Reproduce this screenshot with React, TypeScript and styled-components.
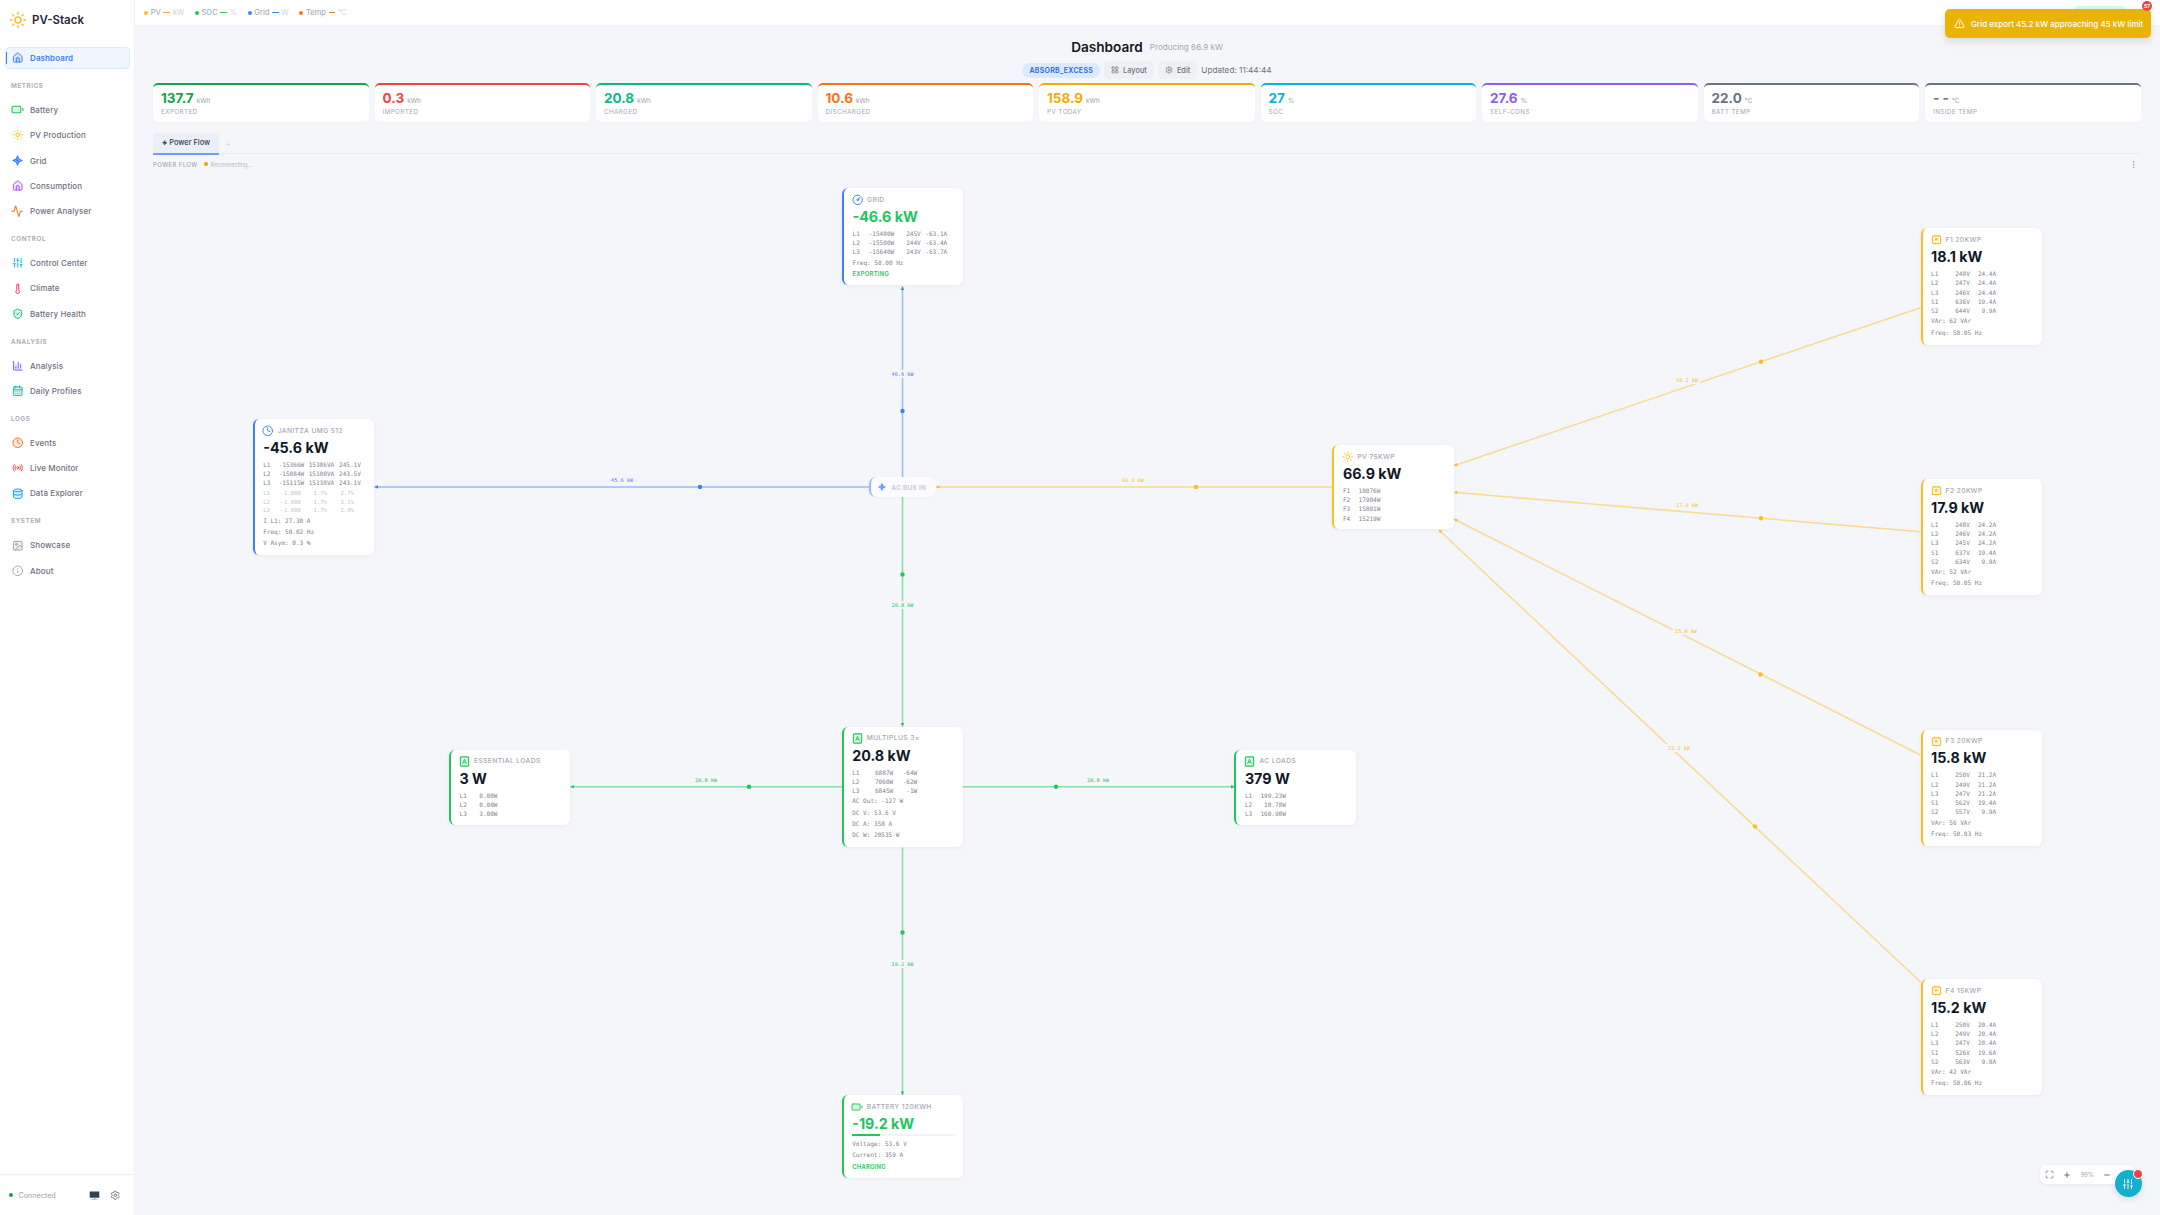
import React from "react";
import styled, { createGlobalStyle } from "styled-components";
import {
	Activity,
	Battery,
	CalendarDays,
	ChartColumn,
	CircleGauge,
	Clock,
	Database,
	EllipsisVertical,
	House,
	Image,
	Info,
	LayoutGrid,
	Maximize,
	Minus,
	Plus,
	Radio,
	Settings,
	ShieldCheck,
	SlidersVertical,
	Sun,
	Thermometer,
	TriangleAlert,
	Zap,
} from "lucide-react";

const BLUE = "#3b82f6";
const GREEN = "#22c55e";
const YELLOW = "#fbbf24";

// canvas origin on the page, node and edge numbers below are page coordinates
const OX = 153;
const OY = 174;

const SparkIcon = ({ size = 10, color = BLUE }: { size?: number; color?: string }) => (
	<svg width={size} height={size} viewBox='0 0 24 24' fill={color} fillOpacity={0.25} stroke={color} strokeWidth={2.4} strokeLinejoin='round'>
		<path d='M12 2l3 7 7 3-7 3-3 7-3-7-7-3 7-3z' />
		<path d='M14 7l-5 5h6l-5 5' fill='none' />
	</svg>
);

const InverterIcon = () => (
	<svg width={11} height={11} viewBox='0 0 24 24' fill='none' stroke={YELLOW} strokeWidth={2.4} strokeLinejoin='round'>
		<rect x='3' y='4' width='18' height='17' rx='3' fill={YELLOW} fillOpacity={0.15} />
		<path d='M8 1.5v2.5M16 1.5v2.5' />
		<rect x='9' y='9' width='5' height='5' fill={YELLOW} stroke='none' />
	</svg>
);

const LoadIcon = () => (
	<svg width={11} height={11} viewBox='0 0 24 24' fill='none' stroke={GREEN} strokeWidth={2.4} strokeLinejoin='round'>
		<rect x='3' y='2' width='18' height='20' rx='2' fill={GREEN} fillOpacity={0.15} />
		<path d='M8 17l4-10 4 10M9.5 13.5h5' strokeWidth={2} />
	</svg>
);

const DesktopIcon = () => (
	<svg width={11} height={11} viewBox='0 0 24 24'>
		<rect x='1.5' y='3' width='21' height='14' rx='1' fill='#334155' />
		<rect x='9.5' y='17' width='5' height='3' fill='#a5c4d4' />
		<rect x='5' y='20' width='14' height='2' fill='#a5c4d4' />
	</svg>
);

const duo = { fill: "currentColor", fillOpacity: 0.15, strokeWidth: 2 };

const NAV = [
	{
		items: [{ label: "Dashboard", icon: <House size={11.5} {...duo} />, color: "#3b82f6", active: true }],
	},
	{
		title: "Metrics",
		items: [
			{ label: "Battery", icon: <Battery size={13} {...duo} />, color: "#22c55e" },
			{ label: "PV Production", icon: <Sun size={11.5} {...duo} />, color: "#fbbf24" },
			{ label: "Grid", icon: <SparkIcon size={11} />, color: "#3b82f6" },
			{ label: "Consumption", icon: <House size={11.5} {...duo} />, color: "#a855f7" },
			{ label: "Power Analyser", icon: <Activity size={12.5} />, color: "#f97316" },
		],
	},
	{
		title: "Control",
		items: [
			{ label: "Control Center", icon: <SlidersVertical size={11.5} />, color: "#06b6d4" },
			{ label: "Climate", icon: <Thermometer size={11.5} {...duo} />, color: "#f43f5e" },
			{ label: "Battery Health", icon: <ShieldCheck size={11.5} {...duo} />, color: "#10b981" },
		],
	},
	{
		title: "Analysis",
		items: [
			{ label: "Analysis", icon: <ChartColumn size={11.5} {...duo} />, color: "#6366f1" },
			{ label: "Daily Profiles", icon: <CalendarDays size={11.5} {...duo} />, color: "#14b8a6" },
		],
	},
	{
		title: "Logs",
		items: [
			{ label: "Events", icon: <Clock size={11.5} {...duo} />, color: "#f97316" },
			{ label: "Live Monitor", icon: <Radio size={11.5} />, color: "#ef4444" },
			{ label: "Data Explorer", icon: <Database size={11.5} {...duo} />, color: "#0ea5e9" },
		],
	},
	{
		title: "System",
		items: [
			{ label: "Showcase", icon: <Image size={11.5} {...duo} />, color: "#9ca3af" },
			{ label: "About", icon: <Info size={11.5} />, color: "#9ca3af" },
		],
	},
];

const LEGEND = [
	{ label: "PV", unit: "kW", color: "#fbbf24", dash: "#f59e42" },
	{ label: "SOC", unit: "%", color: "#22c55e", dash: "#22c55e" },
	{ label: "Grid", unit: "W", color: "#3b82f6", dash: "#3b82f6" },
	{ label: "Temp", unit: "°C", color: "#f97316", dash: "#f97316" },
];

const KPIS = [
	{ value: "137.7", unit: "kWh", label: "Exported", color: "#16a34a" },
	{ value: "0.3", unit: "kWh", label: "Imported", color: "#ef4444" },
	{ value: "20.8", unit: "kWh", label: "Charged", color: "#10b981" },
	{ value: "10.6", unit: "kWh", label: "Discharged", color: "#f97316" },
	{ value: "158.9", unit: "kWh", label: "PV Today", color: "#f0ad0a" },
	{ value: "27", unit: "%", label: "SOC", color: "#06b6d4" },
	{ value: "27.6", unit: "%", label: "Self-Cons", color: "#8b5cf6" },
	{ value: "22.0", unit: "°C", label: "Batt Temp", color: "#6b7280" },
	{ value: "- -", unit: "°C", label: "Inside Temp", color: "#6b7280" },
];

type EdgeData = {
	from: [number, number];
	to: [number, number];
	dot: [number, number];
	label: string;
	at: [number, number];
	color: string;
};

const EDGES: EdgeData[] = [
	{ from: [902.5, 477], to: [902.5, 286.5], dot: [902.5, 411], label: "46.6 kW", at: [902.5, 374], color: BLUE },
	{ from: [869, 487], to: [374.5, 487], dot: [700, 487], label: "45.6 kW", at: [622, 480], color: BLUE },
	{ from: [1332, 487], to: [936, 487], dot: [1196, 487], label: "66.9 kW", at: [1133, 480], color: YELLOW },
	{ from: [902.5, 497], to: [902.5, 726.5], dot: [902.5, 574.5], label: "20.8 kW", at: [902.5, 605], color: GREEN },
	{ from: [842, 786.7], to: [570.5, 786.7], dot: [749, 786.7], label: "20.8 kW", at: [706, 780], color: GREEN },
	{ from: [963, 786.7], to: [1234.5, 786.7], dot: [1056, 786.7], label: "20.8 kW", at: [1098, 780], color: GREEN },
	{ from: [902.5, 847.5], to: [902.5, 1095], dot: [902.5, 932.5], label: "19.2 kW", at: [902.5, 964], color: GREEN },
	{ from: [1920.5, 307.7], to: [1453.8, 465.7], dot: [1761, 361.7], label: "18.1 kW", at: [1687, 380], color: YELLOW },
	{ from: [1920.5, 531.7], to: [1453.8, 492.3], dot: [1761, 518.2], label: "17.9 kW", at: [1687, 505], color: YELLOW },
	{ from: [1920.5, 755], to: [1453.8, 519], dot: [1760.5, 674.5], label: "15.8 kW", at: [1686, 631], color: YELLOW },
	{ from: [1920.5, 982], to: [1438.7, 529.7], dot: [1755, 826.5], label: "15.2 kW", at: [1679, 748], color: YELLOW },
];

const arrowHead = (e: EdgeData) => {
	const a = Math.atan2(e.to[1] - e.from[1], e.to[0] - e.from[0]);
	const p = (d: number, s: number) =>
		`${e.to[0] - OX - Math.cos(a) * d - Math.sin(a) * s},${e.to[1] - OY - Math.sin(a) * d + Math.cos(a) * s}`;
	return `${p(0, 0)} ${p(3.5, 1.8)} ${p(3.5, -1.8)}`;
};

const Flow = () => (
	<EdgeLayer width='100%' height='100%'>
		{EDGES.map((e) => (
			<g key={`${e.label}-${e.dot[0]}-${e.dot[1]}`}>
				<line
					x1={e.from[0] - OX}
					y1={e.from[1] - OY}
					x2={e.to[0] - OX}
					y2={e.to[1] - OY}
					stroke={e.color}
					strokeOpacity={0.5}
					strokeWidth={1.5}
				/>
				<polygon points={arrowHead(e)} fill={e.color} />
				<circle cx={e.dot[0] - OX} cy={e.dot[1] - OY} r={2.2} fill={e.color} />
				<rect x={e.at[0] - OX - 13} y={e.at[1] - OY - 4} width={26} height={8} fill='#f5f6f9' />
				<EdgeLabel x={e.at[0] - OX} y={e.at[1] - OY + 2} fill={e.color}>
					{e.label}
				</EdgeLabel>
			</g>
		))}
	</EdgeLayer>
);

type NodeProps = {
	x: number;
	y: number;
	color: string;
	icon: React.ReactNode;
	title: string;
	value: string;
	valueColor?: string;
	children?: React.ReactNode;
};

const FlowNode = ({ x, y, color, icon, title, value, valueColor, children }: NodeProps) => (
	<Node $x={x - OX} $y={y - OY} $color={color}>
		<NodeHead>
			<NodeIcon>{icon}</NodeIcon>
			<NodeTitle>{title}</NodeTitle>
		</NodeHead>
		<NodeValue $color={valueColor}>{value}</NodeValue>
		{children}
	</Node>
);

const Rows = ({ cols, rows, faint }: { cols: string; rows: string[][]; faint?: boolean }) => (
	<RowGroup $faint={faint}>
		{rows.map((r) => (
			<MetricRow key={r.join()} $cols={cols} $faint={faint}>
				{r.map((c, i) => (
					<span key={i}>{c}</span>
				))}
			</MetricRow>
		))}
	</RowGroup>
);

const STRINGS = [
	{
		y: 228.3,
		title: "F1 20kWp",
		value: "18.1 kW",
		rows: [
			["L1", "248V", "24.4A"],
			["L2", "247V", "24.4A"],
			["L3", "246V", "24.4A"],
			["S1", "636V", "19.4A"],
			["S2", "644V", "9.9A"],
		],
		vars: "62",
		freq: "50.05",
	},
	{
		y: 479,
		title: "F2 20kWp",
		value: "17.9 kW",
		rows: [
			["L1", "248V", "24.2A"],
			["L2", "246V", "24.2A"],
			["L3", "245V", "24.2A"],
			["S1", "637V", "19.4A"],
			["S2", "634V", "9.8A"],
		],
		vars: "52",
		freq: "50.05",
	},
	{
		y: 729.6,
		title: "F3 20kWp",
		value: "15.8 kW",
		rows: [
			["L1", "250V", "21.2A"],
			["L2", "249V", "21.2A"],
			["L3", "247V", "21.2A"],
			["S1", "562V", "19.4A"],
			["S2", "557V", "9.9A"],
		],
		vars: "56",
		freq: "50.03",
	},
	{
		y: 979,
		title: "F4 15kWp",
		value: "15.2 kW",
		rows: [
			["L1", "250V", "20.4A"],
			["L2", "249V", "20.4A"],
			["L3", "247V", "20.4A"],
			["S1", "526V", "19.6A"],
			["S2", "563V", "9.8A"],
		],
		vars: "42",
		freq: "50.06",
	},
];

const App = () => {
	return (
		<Page>
			<GlobalStyle />
			<Sidebar>
				<Brand>
					<Sun size={18} color='#fbbf24' strokeWidth={2} />
					<BrandName>PV-Stack</BrandName>
				</Brand>
				<NavScroll>
					{NAV.map((group, i) => (
						<div key={i}>
							{group.title && <NavSection>{group.title}</NavSection>}
							{group.items.map((item) => (
								<NavItem key={item.label} $active={"active" in item}>
									<NavIcon $color={item.color}>{item.icon}</NavIcon>
									{item.label}
								</NavItem>
							))}
						</div>
					))}
				</NavScroll>
				<SideFooter>
					<StatusDot $color='#16a34a' />
					<Connected>Connected</Connected>
					<DesktopIcon />
					<Settings size={10.5} color='#6b7280' />
				</SideFooter>
			</Sidebar>

			<Main>
				<TopBar>
					{LEGEND.map((l) => (
						<LegendItem key={l.label}>
							<StatusDot $color={l.color} />
							<span>{l.label}</span>
							<LegendDash $color={l.dash} />
							<LegendUnit>{l.unit}</LegendUnit>
						</LegendItem>
					))}
				</TopBar>

				<Content>
					<TitleRow>
						<Title>Dashboard</Title>
						<Subtitle>Producing 66.9 kW</Subtitle>
					</TitleRow>
					<ActionRow>
						<ModePill>ABSORB_EXCESS</ModePill>
						<GhostButton>
							<LayoutGrid size={8} />
							Layout
						</GhostButton>
						<GhostButton>
							<Settings size={8} />
							Edit
						</GhostButton>
						<Updated>Updated: 11:44:44</Updated>
					</ActionRow>

					<KpiGrid>
						{KPIS.map((k) => (
							<KpiCard key={k.label} $color={k.color}>
								<KpiLine>
									<KpiValue $color={k.color}>{k.value}</KpiValue>
									<KpiUnit>{k.unit}</KpiUnit>
								</KpiLine>
								<KpiLabel>{k.label}</KpiLabel>
							</KpiCard>
						))}
					</KpiGrid>

					<Tabs>
						<Tab>
							<Zap size={5.5} color='#374151' fill='#374151' />
							Power Flow
						</Tab>
						<AddTab>+</AddTab>
					</Tabs>

					<FlowHead>
						<FlowTitle>Power Flow</FlowTitle>
						<StatusDot $color='#f59e0b' />
						<FlowState>Reconnecting...</FlowState>
						<EllipsisVertical size={9} color='#9ca3af' style={{ marginLeft: "auto", marginRight: 3 }} />
					</FlowHead>

					<Canvas>
						<Flow />

						<FlowNode x={842} y={188} color={BLUE} icon={<CircleGauge size={11.5} color={BLUE} />} title='Grid' value='-46.6 kW' valueColor={GREEN}>
							<Rows
								cols='15.7px 26px 26.5px 26.5px'
								rows={[
									["L1", "-15480W", "245V", "-63.1A"],
									["L2", "-15500W", "244V", "-63.4A"],
									["L3", "-15640W", "243V", "-63.7A"],
								]}
							/>
							<Detail>Freq: 50.00 Hz</Detail>
							<Flag $color={GREEN}>Exporting</Flag>
						</FlowNode>

						<FlowNode x={252.7} y={419} color={BLUE} icon={<Clock size={11.5} color={BLUE} />} title='Janitza UMG 512' value='-45.6 kW'>
							<Rows
								cols='15.4px 25.6px 30px 26.7px'
								rows={[
									["L1", "-15366W", "15386VA", "245.1V"],
									["L2", "-15084W", "15108VA", "243.5V"],
									["L3", "-15115W", "15138VA", "243.1V"],
								]}
							/>
							<Rows
								faint
								cols='15.4px 22.3px 26px 27px'
								rows={[
									["L1", "-1.000", "1.7%", "2.7%"],
									["L2", "-1.000", "1.7%", "3.1%"],
									["L3", "-1.000", "1.7%", "2.9%"],
								]}
							/>
							<Detail>I L1: 27.30 A</Detail>
							<Detail>Freq: 50.02 Hz</Detail>
							<Detail>V Asym: 0.3 %</Detail>
						</FlowNode>

						<BusNode $x={869 - OX} $y={477 - OY}>
							<SparkIcon size={8} />
							<BusLabel>AC BUS IN</BusLabel>
						</BusNode>

						<FlowNode x={1332.4} y={445} color={YELLOW} icon={<Sun size={11.5} color={YELLOW} />} title='PV 75kWp' value='66.9 kW'>
							<Rows
								cols='15px 22.5px'
								rows={[
									["F1", "18076W"],
									["F2", "17904W"],
									["F3", "15801W"],
									["F4", "15219W"],
								]}
							/>
						</FlowNode>

						{STRINGS.map((s) => (
							<FlowNode key={s.title} x={1920.6} y={s.y} color={YELLOW} icon={<InverterIcon />} title={s.title} value={s.value}>
								<Rows cols='15px 23.7px 26.3px' rows={s.rows} />
								<Detail>VAr: {s.vars} VAr</Detail>
								<Detail>Freq: {s.freq} Hz</Detail>
							</FlowNode>
						))}

						<FlowNode x={449} y={749.7} color={GREEN} icon={<LoadIcon />} title='Essential Loads' value='3 W'>
							<Rows
								cols='15px 23px'
								rows={[
									["L1", "0.00W"],
									["L2", "0.00W"],
									["L3", "3.00W"],
								]}
							/>
						</FlowNode>

						<FlowNode x={841.7} y={726.7} color={GREEN} icon={<LoadIcon />} title='MultiPlus 3×' value='20.8 kW'>
							<Rows
								cols='15px 26px 24px'
								rows={[
									["L1", "6887W", "-64W"],
									["L2", "7060W", "-62W"],
									["L3", "6845W", "-1W"],
								]}
							/>
							<Detail>AC Out: -127 W</Detail>
							<Detail>DC V: 53.6 V</Detail>
							<Detail>DC A: 358 A</Detail>
							<Detail>DC W: 20535 W</Detail>
						</FlowNode>

						<FlowNode x={1234.4} y={749.7} color={GREEN} icon={<LoadIcon />} title='AC Loads' value='379 W'>
							<Rows
								cols='15px 26px'
								rows={[
									["L1", "199.23W"],
									["L2", "18.78W"],
									["L3", "160.98W"],
								]}
							/>
						</FlowNode>

						<FlowNode
							x={841.7}
							y={1095}
							color={GREEN}
							icon={<Battery size={12} color={GREEN} fill={GREEN} fillOpacity={0.15} />}
							title='Battery 120kWh'
							value='-19.2 kW'
							valueColor={GREEN}>
							<SocTrack>
								<SocFill style={{ width: "27%" }} />
							</SocTrack>
							<Detail>Voltage: 53.6 V</Detail>
							<Detail>Current: 359 A</Detail>
							<Flag $color={GREEN}>Charging</Flag>
						</FlowNode>
					</Canvas>
				</Content>

				<Toast>
					<TriangleAlert size={11} color='#fff' />
					Grid export 45.2 kW approaching 45 kW limit
				</Toast>
				<ToastBadge>57</ToastBadge>
				<HiddenPill />

				<ZoomBar>
					<Maximize size={9} />
					<Plus size={8} strokeWidth={3} />
					<ZoomPct>99%</ZoomPct>
					<Minus size={8} strokeWidth={3} />
				</ZoomBar>
				<Fab>
					<SlidersVertical size={12} color='#fff' />
					<FabDot />
				</Fab>
			</Main>
		</Page>
	);
};

export default App;

const GlobalStyle = createGlobalStyle`
	* {
		box-sizing: border-box;
	}
	html, body {
		margin: 0;
		padding: 0;
		background: #f5f6f9;
		font-family: Inter, "Noto Sans", sans-serif;
		overflow: hidden;
	}
`;

const Page = styled.div`
	display: flex;
	width: 2160px;
	height: 1215px;
	overflow: hidden;
`;

const Sidebar = styled.aside`
	width: 135px;
	flex-shrink: 0;
	display: flex;
	flex-direction: column;
	background: #fff;
	border-right: 1px solid #f1f2f5;
`;

const Brand = styled.div`
	height: 47px;
	padding: 0 0 7px 9px;
	display: flex;
	align-items: center;
	gap: 5px;
`;

const BrandName = styled.div`
	font-size: 11.5px;
	font-weight: 600;
	color: #1f2937;
`;

const NavScroll = styled.nav`
	flex: 1;
	padding: 0 4.5px;
`;

const NavSection = styled.div`
	height: 26.5px;
	padding: 9.5px 0 0 6.5px;
	font-size: 6.3px;
	line-height: 8px;
	font-weight: 600;
	letter-spacing: 0.6px;
	text-transform: uppercase;
	color: #a3a8b3;
`;

const NavItem = styled.div<{ $active?: boolean }>`
	position: relative;
	height: 22px;
	margin-bottom: 3.35px;
	padding-left: 7px;
	display: flex;
	align-items: center;
	gap: 7.5px;
	font-size: 8px;
	font-weight: ${(p) => (p.$active ? 600 : 500)};
	letter-spacing: 0.1px;
	color: ${(p) => (p.$active ? "#3b82f6" : "#6b7280")};
	border-radius: 4px;
	background: ${(p) => (p.$active ? "#eff6ff" : "transparent")};
	border: 1px solid ${(p) => (p.$active ? "#dbeafe" : "transparent")};
	&::before {
		content: "";
		display: ${(p) => (p.$active ? "block" : "none")};
		position: absolute;
		left: 0;
		top: 4px;
		bottom: 4px;
		width: 1.5px;
		background: #3b82f6;
	}
`;

const NavIcon = styled.span<{ $color: string }>`
	width: 10px;
	height: 12px;
	display: flex;
	align-items: center;
	justify-content: center;
	color: ${(p) => p.$color};
	svg {
		flex-shrink: 0;
	}
`;

const SideFooter = styled.div`
	height: 41px;
	border-top: 1px solid #eff0f3;
	padding: 0 14px 0 9px;
	display: flex;
	align-items: center;
	gap: 3px;
	svg:last-child {
		margin-left: 7px;
	}
`;

const Connected = styled.span`
	flex: 1;
	margin-left: 2.5px;
	font-size: 7.2px;
	color: #9ca3af;
`;

const StatusDot = styled.span<{ $color: string }>`
	width: 4px;
	height: 4px;
	flex-shrink: 0;
	border-radius: 50%;
	background: ${(p) => p.$color};
`;

const Main = styled.main`
	position: relative;
	flex: 1;
	min-width: 0;
	display: flex;
	flex-direction: column;
`;

const TopBar = styled.header`
	height: 25px;
	flex-shrink: 0;
	padding-left: 9px;
	display: flex;
	align-items: center;
	gap: 10.5px;
	background: #fff;
`;

const LegendItem = styled.div`
	display: flex;
	align-items: center;
	gap: 2.7px;
	font-size: 7.6px;
	color: #9ca3af;
`;

const LegendDash = styled.span<{ $color: string }>`
	width: 6.5px;
	height: 1px;
	background: ${(p) => p.$color};
`;

const LegendUnit = styled.span`
	color: #d1d5db;
`;

const Content = styled.div`
	flex: 1;
	min-height: 0;
	padding: 13px 19px 0 18px;
	display: flex;
	flex-direction: column;
`;

const TitleRow = styled.div`
	height: 18px;
	display: flex;
	justify-content: center;
	align-items: center;
	gap: 7px;
`;

const Title = styled.h1`
	margin: 0;
	font-size: 13.6px;
	font-weight: 600;
	color: #111827;
`;

const Subtitle = styled.span`
	font-size: 8.1px;
	color: #a3a8b3;
`;

const ActionRow = styled.div`
	margin-top: 5px;
	height: 18px;
	display: flex;
	justify-content: center;
	align-items: center;
	gap: 4px;
`;

const ModePill = styled.span`
	height: 15px;
	padding: 0 7px;
	display: flex;
	align-items: center;
	border-radius: 8px;
	background: #dbeafe;
	color: #2563eb;
	font-size: 7px;
	font-weight: 600;
	letter-spacing: 0.3px;
`;

const GhostButton = styled.button`
	height: 18px;
	padding: 0 7px;
	display: flex;
	align-items: center;
	gap: 4px;
	border: none;
	border-radius: 5px;
	background: #eff0f3;
	color: #6b7280;
	font-family: inherit;
	font-size: 7.4px;
	font-weight: 500;
`;

const Updated = styled.span`
	font-size: 8.2px;
	color: #6b7280;
`;

const KpiGrid = styled.section`
	margin-top: 4px;
	display: grid;
	grid-template-columns: repeat(9, 1fr);
	gap: 5.6px;
`;

const KpiCard = styled.div<{ $color: string }>`
	height: 39px;
	padding: 6px 8px 0;
	border-top: 2px solid ${(p) => p.$color};
	border-radius: 5px;
	background: #fff;
	box-shadow: 0 1px 2px rgba(0, 0, 0, 0.02);
`;

const KpiLine = styled.div`
	height: 15px;
	display: flex;
	align-items: baseline;
	gap: 3px;
`;

const KpiValue = styled.span<{ $color: string }>`
	font-size: 13.5px;
	line-height: 15px;
	font-weight: 700;
	color: ${(p) => p.$color};
`;

const KpiUnit = styled.span`
	font-size: 6.4px;
	color: #9ca3af;
`;

const KpiLabel = styled.div`
	margin-top: 1.5px;
	font-size: 6.3px;
	line-height: 9px;
	letter-spacing: 0.4px;
	text-transform: uppercase;
	color: #a3a8b3;
`;

const Tabs = styled.div`
	margin-top: 11px;
	height: 21px;
	flex-shrink: 0;
	display: flex;
	align-items: stretch;
	border-bottom: 1.5px solid #e9ebef;
`;

const Tab = styled.div`
	width: 66px;
	margin-bottom: -1.5px;
	display: flex;
	align-items: center;
	justify-content: center;
	gap: 2px;
	border-radius: 4px 4px 0 0;
	border-bottom: 2px solid #6f9ef5;
	background: #eaeff8;
	font-size: 7.4px;
	font-weight: 500;
	color: #374151;
`;

const AddTab = styled.div`
	margin-left: 7px;
	display: flex;
	align-items: center;
	font-size: 7px;
	color: #c4c8d0;
`;

const FlowHead = styled.div`
	height: 20px;
	flex-shrink: 0;
	display: flex;
	align-items: center;
	gap: 6px;
`;

const FlowTitle = styled.span`
	font-size: 5.9px;
	letter-spacing: 0.45px;
	text-transform: uppercase;
	font-weight: 500;
	color: #a3a8b3;
`;

const FlowState = styled.span`
	margin-left: -3px;
	font-size: 5.7px;
	color: #b4b8c1;
`;

const Canvas = styled.div`
	position: relative;
	flex: 1;
`;

const EdgeLayer = styled.svg`
	position: absolute;
	left: 0;
	top: 0;
	overflow: visible;
`;

const EdgeLabel = styled.text`
	font-family: "DejaVu Sans Mono", monospace;
	font-size: 5.2px;
	text-anchor: middle;
`;

const Node = styled.div<{ $x: number; $y: number; $color: string }>`
	position: absolute;
	left: ${(p) => p.$x}px;
	top: ${(p) => p.$y}px;
	width: 121.3px;
	padding: 6px 8px 6.5px 8.5px;
	border-left: 2px solid ${(p) => p.$color};
	border-radius: 6px;
	background: #fff;
	box-shadow: 0 1px 4px rgba(0, 0, 0, 0.05);
`;

const NodeHead = styled.div`
	height: 11.4px;
	display: flex;
	align-items: center;
	gap: 4.5px;
`;

const NodeIcon = styled.span`
	width: 10px;
	height: 11.4px;
	display: flex;
	align-items: center;
	justify-content: center;
	svg {
		flex-shrink: 0;
	}
`;

const NodeTitle = styled.span`
	font-size: 6.7px;
	font-weight: 500;
	letter-spacing: 0.4px;
	text-transform: uppercase;
	color: #a3a8b3;
	white-space: nowrap;
`;

const NodeValue = styled.div<{ $color?: string }>`
	margin-top: 2.5px;
	font-size: 14.3px;
	line-height: 17px;
	font-weight: 700;
	color: ${(p) => p.$color || "#111827"};
	white-space: nowrap;
`;

const RowGroup = styled.div<{ $faint?: boolean }>`
	margin-top: ${(p) => (p.$faint ? "1.5px" : "4px")};
`;

const MetricRow = styled.div<{ $cols: string; $faint?: boolean }>`
	display: grid;
	grid-template-columns: ${(p) => p.$cols};
	font-family: "DejaVu Sans Mono", monospace;
	font-size: ${(p) => (p.$faint ? "5.6px" : "6.05px")};
	line-height: ${(p) => (p.$faint ? "8.5px" : "9.2px")};
	color: ${(p) => (p.$faint ? "#c0c4cc" : "#7f848e")};
	white-space: pre;
	span {
		text-align: right;
	}
	span:first-child {
		text-align: left;
	}
`;

const Detail = styled.div`
	font-family: "DejaVu Sans Mono", monospace;
	font-size: 6.05px;
	line-height: 11.4px;
	color: #7f848e;
`;

const Flag = styled.div<{ $color: string }>`
	margin-top: 1px;
	font-size: 5.8px;
	line-height: 10px;
	font-weight: 600;
	letter-spacing: 0.3px;
	text-transform: uppercase;
	color: ${(p) => p.$color};
`;

const SocTrack = styled.div`
	margin: 2.5px 0 2px;
	height: 1.3px;
	background: #f1f2f5;
`;

const SocFill = styled.div`
	height: 100%;
	background: ${GREEN};
`;

const BusNode = styled.div<{ $x: number; $y: number }>`
	position: absolute;
	left: ${(p) => p.$x}px;
	top: ${(p) => p.$y}px;
	width: 67px;
	height: 20px;
	padding-left: 7px;
	display: flex;
	align-items: center;
	gap: 5.5px;
	border-left: 2px solid #93bdf8;
	border-radius: 7px;
	background: #fbfbfd;
	box-shadow: 0 1px 3px rgba(0, 0, 0, 0.03);
`;

const BusLabel = styled.span`
	font-size: 6.2px;
	font-weight: 600;
	letter-spacing: 0.4px;
	color: #c2c5cd;
	white-space: nowrap;
`;

const Toast = styled.div`
	position: absolute;
	left: 1809.5px;
	top: 9px;
	width: 206.5px;
	height: 29px;
	padding-left: 9.5px;
	display: flex;
	align-items: center;
	gap: 6px;
	border-radius: 5px;
	background: #eab308;
	box-shadow: 0 3px 8px rgba(0, 0, 0, 0.12);
	color: #fff;
	font-size: 8px;
	font-weight: 500;
	white-space: nowrap;
	z-index: 3;
`;

const ToastBadge = styled.span`
	position: absolute;
	left: 2007px;
	top: 1px;
	width: 10px;
	height: 10px;
	display: flex;
	align-items: center;
	justify-content: center;
	border-radius: 50%;
	background: #ef4444;
	color: #fff;
	font-size: 5px;
	font-weight: 700;
	z-index: 4;
`;

const HiddenPill = styled.span`
	position: absolute;
	left: 1939px;
	top: 6px;
	width: 52px;
	height: 10px;
	border-radius: 4px;
	background: #dcfce7;
`;

const ZoomBar = styled.div`
	position: absolute;
	left: 1905px;
	top: 1165px;
	width: 95px;
	height: 19px;
	padding: 0 24px 0 5px;
	display: flex;
	align-items: center;
	justify-content: space-between;
	border-radius: 6px;
	background: #fff;
	box-shadow: 0 1px 4px rgba(0, 0, 0, 0.06);
	color: #6b7280;
`;

const ZoomPct = styled.span`
	font-size: 5.8px;
	color: #a3a8b3;
`;

const Fab = styled.div`
	position: absolute;
	left: 1979.5px;
	top: 1170px;
	width: 27px;
	height: 27px;
	display: flex;
	align-items: center;
	justify-content: center;
	border-radius: 50%;
	background: #0fb1cf;
	box-shadow: 0 2px 6px rgba(0, 0, 0, 0.12);
`;

const FabDot = styled.span`
	position: absolute;
	right: -1px;
	top: -1px;
	width: 10px;
	height: 10px;
	border: 1px solid #fff;
	border-radius: 50%;
	background: #ef4444;
`;
